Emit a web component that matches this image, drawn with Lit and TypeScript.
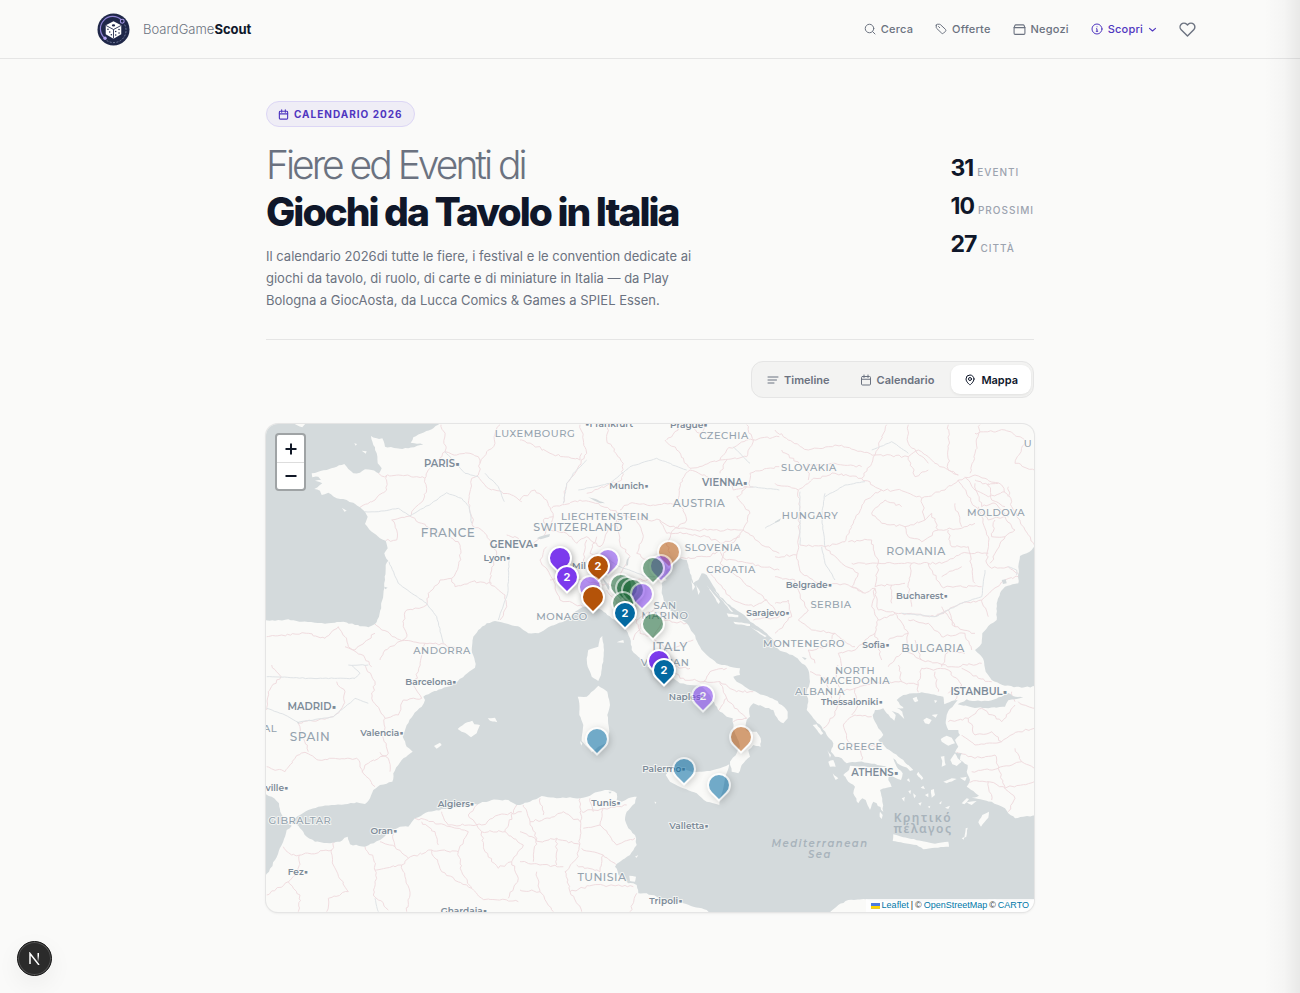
import { LitElement, html, svg, css } from "lit";
import { customElement, state } from "lit/decorators.js";
import { classMap } from "lit/directives/class-map.js";
import { styleMap } from "lit/directives/style-map.js";

/* ---------- map geometry ---------- */

type Pt = [number, number];

const MAP_W = 768;
const MAP_H = 488;

// The coastline is surveyed on six sheets, three units per map unit.
const SHEETS: Record<string, Pt> = {
  A: [-1, -4], B: [254, -4], C: [509, -4],
  D: [-1, 241], E: [254, 241], F: [509, 241],
};

function survey(src: string): Pt[] {
  const pts: Pt[] = [];
  let origin: Pt = SHEETS.A;
  for (const token of src.trim().split(/\s+/)) {
    if (SHEETS[token]) { origin = SHEETS[token]; continue; }
    const [x, y] = token.split(",").map(Number);
    pts.push([origin[0] + x / 3, origin[1] + y / 3]);
  }
  return pts;
}

// Breaks long straight runs into small irregular steps.
function roughen(pts: Pt[], amount: number, closed: boolean): string {
  let seed = Math.round(pts[0][0] * 31 + pts[0][1] * 17 + pts.length * 7) % 9973;
  const rnd = () => {
    seed = (seed * 16807 + 11) % 2147483647;
    return seed / 2147483647 - 0.5;
  };
  const out: string[] = [];
  const last = closed ? pts.length : pts.length - 1;
  for (let i = 0; i < last; i++) {
    const a = pts[i];
    const b = pts[(i + 1) % pts.length];
    const len = Math.hypot(b[0] - a[0], b[1] - a[1]);
    const n = Math.max(1, Math.round(len / 3));
    out.push(a[0].toFixed(1) + " " + a[1].toFixed(1));
    for (let k = 1; k < n; k++) {
      const t = k / n;
      const x = a[0] + (b[0] - a[0]) * t + rnd() * amount;
      const y = a[1] + (b[1] - a[1]) * t + rnd() * amount;
      out.push(x.toFixed(1) + " " + y.toFixed(1));
    }
  }
  if (!closed) {
    const e = pts[pts.length - 1];
    out.push(e[0].toFixed(1) + " " + e[1].toFixed(1));
  }
  return "M" + out.join("L") + (closed ? "Z" : "");
}

const area = (src: string, amount = 1.2) => roughen(survey(src), amount, true);
const line = (src: string, amount = 2.4) => roughen(survey(src), amount, false);

const SEAS = [
  // Channel and Bay of Biscay
  `A 0,5 530,5 520,14 500,28 470,40 445,52 437,68 475,74 430,85 395,85 360,80 352,55 335,55 318,48 325,75 335,100 338,130 350,145
   342,160 320,150 300,148 285,158 265,160 245,140 238,132 215,140 185,150 160,155 140,160 142,172 160,170 168,180 150,182 172,190
   148,207 165,212 170,225 190,218 215,235 245,240 265,248 285,262 300,275 308,290 300,312 320,335 345,355 362,362 368,385 358,400
   370,422 362,435 360,480 352,540 342,590 330,612 310,622 270,615 235,605 190,610 150,608 110,605 70,598 30,602 -5,602`,
  // Gulf of Cadiz
  `D -5,385 20,395 42,415 46,440 60,465 80,482 65,495 50,540 30,585 12,620 -5,645`,
  // Mediterranean, Adriatic and Aegean
  `D 70,472 105,450 130,435 160,425 200,420 240,418 275,412 300,417 315,400 325,375 345,360 382,350 385,325 400,300 410,285 443,260
   425,245 413,215 425,180 445,150 470,125 480,105 475,95 500,82 530,72 570,55 600,30 630,8
   A 632,732 628,715 620,690 625,650 640,630 665,610 690,603 720,610 750,618 765,622
   B 10,630 25,640 55,640 85,622 110,612 140,600 165,575 190,560 215,558 245,570 262,585 285,600 300,608 318,630 330,655 335,690 355,710 385,735
   E 405,15 430,35 460,40 480,55 510,60 540,60 570,90 585,120 600,140 620,155 638,160 640,190 650,215 660,245 650,265 630,290
   635,320 655,325 665,300 690,275 685,255 700,240 722,245 722,220 710,200 685,200 675,190 680,165 690,155 688,130 700,115 730,125 760,135
   F 0,150 10,165 25,175 38,160 38,140 20,120 0,105
   E 750,98 730,90 690,75 650,50 640,35 660,30 660,10 630,5
   B 590,730 555,700 540,680 520,640 500,610 470,590 450,570 435,550 425,520 425,490 440,480 430,470 440,450 460,430 480,415 500,420
   505,435 510,460 520,490 535,480 545,460 560,465 575,490 600,530 630,555 665,580 700,610 740,640 760,660
   C 0,682 25,695 60,710 90,735
   F 100,15 105,50 95,80 100,110 95,135 115,160 140,185 155,210 175,235 168,260 180,275 200,280 215,295 250,290 290,296 335,303 310,309
   260,304 225,302 222,315 205,330 220,350 240,365 235,385 250,415 262,400 272,405 285,435 295,410 305,415 325,440 322,410 315,375 330,370
   350,365 340,345 345,330 378,345 383,325 365,305 355,280 375,300 400,308 385,285 350,260 330,245 310,225 325,210 310,190 300,170 293,150
   300,135 325,130 335,145 358,167 362,150 350,138 370,145 388,162 382,140 365,128 385,130 403,148 375,120 365,105 385,90 415,85 440,82
   470,88 505,95 508,118 530,108 548,106 520,138 515,150 512,175 520,195 550,195 555,210 540,225 550,245 540,262 560,265 555,285 578,300
   575,320 585,345 575,365 595,378 612,392 590,398 625,405 650,410 670,420 690,430 700,445 720,460 745,455 785,452
   785,706 740,708 650,704 600,706 500,708 400,712 300,706 265,702 220,705 190,720 160,745
   E 575,745 560,735 520,725 490,715 460,708 430,710 410,695 380,685 355,685 350,660 340,655 325,655 300,635 285,605 300,590 330,570
   350,540 345,510 325,490 315,465 320,440 345,415 350,395 325,400 305,410 290,405 290,385 265,375 235,380 210,392 180,400 150,397 110,400
   65,393 30,410 0,420
   D 755,420 730,405 680,405 645,415 600,425 540,432 490,440 450,460 430,485 405,485 370,505 345,525 300,545 255,538 248,515 225,530
   195,535 150,530 125,515 105,490 100,482`,
  // Black Sea
  `C 785,378 755,400 735,408 730,440 730,490 690,500 675,520 665,550 665,600 640,618 622,640 620,670 600,690 620,710 628,732
   F 628,0 632,20 650,45 690,62 740,68 785,64`,
  // Sea of Marmara
  `F 548,118 575,103 600,108 640,108 680,95 700,84 712,92 745,99 700,106 690,125 640,130 590,127`,
];

const ISLANDS = [
  // Corsica, Sardinia, Sicily
  `B 240,655 247,648 252,690 250,725 E 246,0 243,30 235,48 215,35 203,5 B 200,715 205,690 235,680`,
  `E 173,95 200,95 235,62 262,80 270,120 262,150 268,200 260,235 235,245 215,262 185,228 190,180 178,150 178,115`,
  `E 437,330 450,315 480,310 520,322 570,318 600,310 628,298 615,340 610,370 600,400 598,420 560,410 530,385 490,370 450,350`,
  // Balearics
  `D 578,192 600,175 622,167 628,178 645,180 635,205 618,217 600,203 590,200`,
  `D 668,160 690,158 697,172 675,167`,
  `D 507,243 525,233 530,240 515,251`,
  // Crete, Rhodes, Karpathos
  `F 355,508 375,514 400,520 440,528 480,536 520,530 522,545 480,548 445,553 425,540 385,534 353,528`,
  `F 610,472 622,450 642,440 640,458 618,485`,
  `F 572,490 578,488 574,515 568,518`,
  // Aegean
  `F 315,440 323,450 320,462 314,455`,
  `F 385,295 405,318 415,315 400,300`, `F 430,320 445,340 440,345 425,328`,
  `F 445,165 455,158 470,165 462,178 450,175`, `F 470,150 488,148 482,158`,
  `F 413,100 425,95 430,108 420,112`, `F 478,105 487,107 480,115`,
  `F 497,222 515,212 530,218 540,235 520,242 500,230`, `F 497,275 508,273 512,300 500,305 502,288`,
  `F 526,285 540,265 548,280 560,290 545,303 532,298`, `F 505,350 530,340 545,342 515,355`, `F 555,338 575,335 570,348`,
  `F 468,375 477,372 480,390 470,398`, `F 450,390 460,385 460,397`, `F 437,368 445,362 450,372`,
  `F 415,385 423,392 418,400`, `F 395,345 402,340 405,352`, `F 400,378 408,376 406,388`, `F 380,400 390,396 388,410`,
  `F 430,415 440,412 436,422`, `F 458,425 466,422 464,430`, `F 492,415 500,408 498,418`, `F 510,428 525,422 520,432`,
  `F 560,415 575,400 582,402 568,418`, `F 575,412 605,408 590,420`, `F 560,520 568,516 566,524`,
  // Ionian
  `F 113,180 125,178 145,205 138,210`, `F 160,290 175,285 182,305 165,305`, `F 173,325 190,340 182,345`, `F 157,255 168,270 165,278`,
  // Dalmatia
  `B 513,480 525,500 518,512`, `B 528,495 540,515 535,525`, `B 560,495 600,545 596,552`, `B 580,510 640,575 634,575`,
  `B 620,580 655,585 655,592 625,590`, `B 640,605 690,612 690,618 645,612`, `B 690,620 740,648 735,652`,
  // Elba, Malta, Djerba, Channel Islands
  `B 290,667 310,660 312,668`, `E 403,410 409,411 407,417`, `E 328,632 348,635 345,650 330,648`,
  `A 290,92 305,94 302,101`, `A 268,70 276,72 272,77`, `A 230,264 245,272 238,275`, `A 75,5 125,5 112,22`,
  `E 355,570 345,575 350,578`, `E 180,228 187,235 184,242`,
];

const BORDERS = [
  // France
  `A 528,14 540,45 540,95 575,105 615,100 640,110 645,130 665,95 690,70 690,40 705,14`,
  `A 338,150 350,168 400,165 455,170 480,175 490,150 520,120 540,95`,
  `A 365,165 365,210 330,240 285,262`, `A 480,175 485,205 475,240 440,275 435,288`,
  `A 435,288 380,300 395,330 395,360 362,362`, `A 435,288 470,310 500,330 540,345 580,365 588,400 580,440 560,475`,
  `A 645,130 640,165 620,175 615,215 610,250 620,290 625,320 650,330 680,365 695,400 680,450 675,490 720,525 725,560 705,600`,
  `A 640,170 670,205 710,215 740,225 770,245`, `A 560,475 525,480 490,520 485,555 420,575 415,620 425,650 410,662`,
  `A 560,475 570,500 620,485 680,490`, `A 725,345 760,355 770,380`,
  `A 330,612 350,630 410,662 480,670 540,672 585,690`,
  // Spain, Portugal, Morocco
  `A 5,650 50,645 130,640 180,655 220,620 240,650 250,680 300,715 320,740`,
  `A 330,640 300,665 270,690 240,680`, `A 410,662 360,690 345,720`, `A 480,670 475,700 D 460,20 445,60 470,100`,
  `D 20,0 48,35 10,80 5,135`, `D 5,305 60,320 90,280 120,262 160,285 275,280 300,330 330,365`,
  `D 215,50 240,80 235,120 205,155 100,175 130,260`, `D 300,0 330,50 320,100 360,160 400,150 415,105 470,100`,
  `D 360,160 355,220 370,265 300,300 290,320`, `D 345,262 370,280 375,320`,
  `D 55,545 80,570 105,570 200,555 210,530`, `D 300,545 325,580 335,640 325,690 370,735`, `D 105,570 100,620 70,650 5,690`,
  `D 200,555 205,600 250,680 190,700 185,740`, `D 70,650 105,690 100,740`,
  // Algeria, Tunisia
  `D 345,530 390,545 430,580 500,555 580,560 610,500 540,480 450,460`, `D 330,615 410,600 430,580`, `D 410,600 435,690 425,740`,
  `D 500,555 530,620 620,670 650,700 760,710`, `D 580,560 590,620 620,670`, `D 640,415 610,450 650,500 720,500 755,420`,
  `D 470,470 510,500 520,540`, `D 650,500 660,560 700,610 740,590 760,640 730,700`, `D 530,440 550,480 610,480`,
  `D 610,480 650,480 700,450 770,440`, `D 720,500 775,540 740,590`, `D 385,505 390,545`,
  `E 180,400 185,460 180,520 170,580 135,620 150,680 185,740`, `E 10,420 30,470 90,460 130,440 180,470`,
  `E 0,500 60,530 110,520 180,540`, `E 30,470 50,520 40,590`, `E 0,590 60,600 130,605`, `E 110,520 110,600`, `E 50,620 60,680 100,740`,
  `E 0,675 60,680`, `E 185,440 250,430 320,420`, `E 250,430 240,480 290,540 345,520`, `E 185,550 250,570 290,600`,
  `E 240,480 190,490`, `E 250,570 240,620 170,600`, `E 150,680 220,660 340,665`, `E 350,685 330,740`, `E 210,400 220,440`, `E 60,400 70,450`,
  // Germany, Czechia, Austria, Switzerland
  `B 0,60 40,75 90,100 130,110 180,120 185,100`, `B 180,14 190,60 200,100 165,160 140,190 130,250`,
  `B 265,14 260,60 310,130 305,180 200,220`, `B 435,60 470,90 510,145 600,120 680,110 700,60 680,14`,
  `B 440,60 475,30 475,14`, `B 510,150 480,190 470,250 400,255 330,250 300,270`, `B 95,265 180,240 235,250 270,270 300,280 350,300 420,300`,
  `B 0,240 45,210 80,240 100,290 70,350 40,370`, `B 100,290 70,300 90,330 140,340 170,370 200,350 240,380 270,320 300,300`,
  `B 420,300 450,320 520,330 580,330 670,330 690,280 650,230 680,200 600,180 560,170 510,150`, `B 690,200 690,160 778,140`,
  `B 600,120 620,90 680,60 778,50`, `B 510,14 540,40 560,14`, `B 620,170 640,210 700,200`, `B 670,330 720,370 778,400`,
  `B 480,250 500,300 460,330 440,370 450,400`, `B 500,340 560,350 610,370 660,350`, `B 480,415 560,410 600,390 620,420 690,430 778,450`,
  `B 670,330 610,400 600,430 690,500 740,540 700,560 640,540 580,470 560,450`, `B 740,540 778,590 700,600`, `B 600,160 620,120`,
  // Italy
  `B 80,380 60,420 100,480 120,540 190,560`, `B 90,480 150,470 230,490 290,500 350,480 430,480`, `B 200,360 190,420 220,470`,
  `B 290,300 300,370 330,410 300,470`, `B 350,300 370,350 350,400 400,430`, `B 260,510 300,560 350,600 420,560`,
  `B 350,600 360,640 400,650 430,600 500,610`, `B 400,650 440,690 520,660`, `B 370,600 340,660`, `B 440,690 450,740 510,745`,
  `E 450,0 480,40 550,50 570,20 620,10`, `E 550,50 600,50 650,80 700,80`, `E 600,50 620,100 590,140`, `E 620,100 680,160 640,170`,
  `B 250,410 210,400 230,350`, `B 420,300 440,340 500,340`,
  // Poland, Slovakia, Hungary, Ukraine
  `C 0,30 40,60 100,90 180,75 240,90 300,105 335,14`, `C 0,190 70,210 110,180 180,160 260,175 290,130 300,105`,
  `C 70,210 75,260 70,375 65,405 0,410`, `C 260,175 320,210 380,212 440,235 510,210 550,180 600,165 680,195 700,230`,
  `C 320,210 270,240 235,310 210,365 150,380 75,375`, `C 300,105 400,110 430,90 480,130 550,165`, `C 400,110 420,170 460,150`,
  `C 520,14 520,150 550,165`, `C 615,14 600,100 585,160`, `C 400,14 400,70 460,130`, `C 600,40 690,30 750,60 720,130 778,150`,
  `C 550,180 580,230 620,290 640,350 635,430 650,445 700,440 730,460`, `C 700,200 710,260 750,330 778,375`,
  `C 570,170 600,210 640,230 690,215`, `C 600,190 620,260 660,250 700,290`, `C 610,260 640,300 690,290 720,330 690,350 660,400 645,430`,
  `C 640,190 650,240 690,260`, `C 660,300 650,350 690,350`, `C 600,180 640,195 670,190`, `C 100,130 100,180`, `C 20,90 80,140 180,130 260,140`,
  // Romania
  `C 150,380 200,430 250,460 230,500 270,520 300,505 310,570 380,580 480,590 560,550 620,540 690,480 730,470`,
  `C 290,360 220,365`, `C 290,360 310,430 380,430 410,430 500,430 560,400 640,400`, `C 410,430 400,490 410,560`, `C 460,430 500,500 620,500`,
  `C 440,235 450,300 390,320 400,350 440,365 490,330 560,325 600,310`, `C 290,280 320,310 390,320`, `C 290,280 330,240 380,260`,
  `C 490,330 470,280 450,300`, `C 520,330 530,380 580,380 590,440 600,490`, `C 540,250 560,320`, `C 310,430 300,500 390,490`,
  `C 230,430 310,430`, `C 560,440 500,470`, `C 350,495 350,550`,
  // Balkans, Bulgaria
  `C 0,470 60,480 80,540 100,570 70,600 110,630 180,640 215,670 240,680`, `C 65,405 80,460 130,490 220,495 265,520`,
  `C 300,505 290,560 310,600 300,640 240,690 190,700 200,740`, `C 180,640 150,680 100,690 120,730`, `C 0,550 40,540 50,590 0,640`,
  `C 310,600 360,580 400,640 390,690 440,720 530,740 620,730`, `C 400,600 460,610 500,650`, `C 480,590 520,570 540,620 600,640`,
  `C 400,640 340,660`, `C 500,650 570,640 590,690`, `C 540,620 500,560`, `C 440,720 420,660`, `C 500,740 520,690 570,700`,
  `C 620,540 640,590`, `C 300,640 320,720`, `C 340,740 380,700`,
  `F 190,0 180,40 200,80 240,70 300,55 360,50 430,60 440,10 520,15 560,60 520,85`, `F 200,80 180,150 145,190`, `F 105,20 150,40 170,100`,
  `F 240,150 205,180 220,230 260,250 320,240`, `F 240,150 290,155`, `F 240,70 250,120 230,150`, `F 430,60 430,82`, `F 560,60 540,105`,
  `F 560,10 610,40 650,50`, `F 260,250 260,285`, `F 380,50 370,0`, `F 480,20 490,80`,
  // Anatolia
  `F 520,170 580,160 620,130`, `F 580,160 600,210 650,200 680,230 730,200 778,190`, `F 560,210 600,240 680,230`, `F 620,130 680,170 720,120`,
  `F 545,262 600,280 660,270 670,310 590,320`, `F 670,310 740,290 778,310`, `F 580,350 640,350 690,370 670,310`, `F 690,370 720,400 700,440`,
  `F 720,250 740,290`, `F 690,370 778,350`, `F 730,110 778,130`, `F 710,80 720,110`, `F 640,350 650,405`,
];

const RIVERS = [
  `A 300,275 340,275 400,265 435,288 500,250 545,218 590,235 612,260 620,310`, `A 540,95 600,160 640,170`,
  `A 660,160 700,200 718,245`, `A 372,425 400,490 440,520 485,550 515,590 535,670`, `A 733,405 728,520 700,600`,
  `B 200,120 160,160 140,190 130,250`, `B 175,210 270,190 330,140 410,115 500,150`, `B 690,200 778,210`, `B 640,80 690,130`,
  `C 75,215 75,375`, `C 150,220 140,290 150,380`, `C 270,185 210,195 150,230`, `C 290,90 350,65 400,100`, `C 140,380 150,430 180,480`,
  `C 380,580 480,590 560,550 620,530 630,450`, `C 700,440 725,450 725,465`,
  `D 5,130 60,150 100,172 205,155 270,100 310,115`, `D 5,35 130,40 270,40 285,25 260,0`, `D 310,0 250,0`,
  `B 250,410 300,440 380,470 430,470`, `B 735,325 778,300`, `D 340,740 330,700`,
];

const LAKES = [
  `B 50,355 68,347 90,342 88,350 62,358`, `B 205,232 225,236 255,250 240,250`, `B 320,420 327,410 324,435 319,438`,
  `C 0,305 18,295 14,303 0,308`, `C 680,480 692,478 695,490 684,492`, `B 245,470 270,500 265,510`, `C 80,710 95,715 90,720`,
  `E 265,380 275,380 270,386`, `D 95,172 103,172 100,177`, `A 358,500 368,503 360,508`,
];

const LAND_SHAPES = ISLANDS.map((s) => area(s, 0.6)).join("");
const SEA_SHAPES = SEAS.map((s) => area(s)).join("");
const BORDER_LINES = BORDERS.map((s) => line(s)).join("");
const RIVER_LINES = RIVERS.map((s) => line(s, 0.8)).join("");
const LAKE_SHAPES = LAKES.map((s) => area(s, 0.4)).join("");

/* ---------- map content ---------- */

type Label = { text: string; x: number; y: number; kind: string };

const country = (text: string, x: number, y: number, kind = "country"): Label => ({ text, x, y, kind });
const city = (text: string, x: number, y: number, kind = "city"): Label => ({ text, x, y, kind });

const LABELS: Label[] = [
  country("LUXEMBOURG", 269, 13), country("CZECHIA", 458, 15), country("SLOVAKIA", 543, 47), country("FRANCE", 182, 113, "country large"),
  country("LIECHTENSTEIN", 339, 96), country("SWITZERLAND", 312, 107, "country medium"), country("AUSTRIA", 433, 83, "country medium"),
  country("HUNGARY", 544, 95), country("ROMANIA", 650, 131, "country medium"), country("MOLDOVA", 730, 92), country("SLOVENIA", 447, 127),
  country("CROATIA", 465, 149), country("SERBIA", 565, 184), country("MONACO", 296, 196), country("SAN", 399, 185),
  country("MARINO", 399, 195), country("ITALY", 404, 227, "country large"), country("VATICAN", 399, 242), country("MONTENEGRO", 538, 223),
  country("BULGARIA", 667, 228, "country medium"), country("NORTH", 589, 250), country("MACEDONIA", 589, 260), country("ALBANIA", 554, 271),
  country("GREECE", 594, 326), country("ANDORRA", 176, 230), country("SPAIN", 44, 317, "country large"), country("GIBRALTAR", 34, 400),
  country("TUNISIA", 336, 457, "country medium"), country("U", 762, 23), country("AL", 4, 308),
  country("Mediterranean", 554, 423, "sea"), country("Sea", 554, 434, "sea"), country("Κρητικό", 657, 398, "sea upright"),
  country("πέλαγος", 657, 409, "sea upright"),
  city("PARIS", 176, 43, "capital"), city("VIENNA", 459, 62, "capital"), city("GENEVA", 248, 124, "capital"), city("MADRID", 46, 286, "capital"),
  city("ISTANBUL", 713, 271, "capital"), city("ATHENS", 609, 352, "capital"), city("Munich", 363, 65), city("Lyon", 231, 137),
  city("Mil", 313, 145), city("Belgrade", 543, 164), city("Bucharest", 656, 175), city("Sofia", 610, 224),
  city("Sarajevo", 502, 192), city("Thessaloniki", 586, 281), city("Barcelona", 165, 261), city("Valencia", 116, 312), city("ville", 11, 367),
  city("Oran", 118, 410), city("Algiers", 190, 383), city("Fez", 32, 451), city("Tunis", 340, 382), city("Valletta", 423, 405),
  city("Tripoli", 400, 480), city("Palermo", 398, 348), city("Naples", 421, 276), city("Ghardaia", 198, 490), city("Frankfurt", 343, 3),
  city("Prague", 423, 4),
];

const dotted = (l: Label) => {
  if (l.text === "Mil") return l.text;
  if (l.text === "Frankfurt") return "▪" + l.text;
  return l.kind === "city" || l.kind === "capital" ? l.text + "▪" : l.text;
};

type Pin = { place: string; x: number; y: number; tone: string; past?: boolean; count?: number };

const PINS: Pin[] = [
  { place: "Udine", x: 403, y: 128, tone: "amber", past: true },
  { place: "Aosta", x: 294, y: 134, tone: "violet" },
  { place: "Bergamo", x: 342, y: 136, tone: "violet", past: true },
  { place: "Venezia", x: 395, y: 142, tone: "violet", past: true },
  { place: "Milano", x: 332, y: 142, tone: "amber", count: 2 },
  { place: "Padova", x: 387, y: 144, tone: "green", past: true },
  { place: "Torino", x: 301, y: 153, tone: "violet", count: 2 },
  { place: "Parma", x: 355, y: 161, tone: "green", past: true },
  { place: "Alessandria", x: 324, y: 163, tone: "violet", past: true },
  { place: "Reggio Emilia", x: 361, y: 164, tone: "green", past: true },
  { place: "Modena", x: 367, y: 166, tone: "green", past: true },
  { place: "Bologna", x: 376, y: 170, tone: "violet", past: true },
  { place: "Genova", x: 327, y: 173, tone: "amber" },
  { place: "Massa", x: 357, y: 179, tone: "green", past: true },
  { place: "Lucca", x: 359, y: 189, tone: "blue", count: 2 },
  { place: "Perugia", x: 387, y: 200, tone: "green", past: true },
  { place: "Viterbo", x: 393, y: 237, tone: "violet" },
  { place: "Roma", x: 398, y: 246, tone: "blue", count: 2 },
  { place: "Napoli", x: 437, y: 272, tone: "violet", past: true, count: 2 },
  { place: "Cosenza", x: 475, y: 313, tone: "amber", past: true },
  { place: "Cagliari", x: 331, y: 315, tone: "blue", past: true },
  { place: "Palermo", x: 418, y: 345, tone: "blue", past: true },
  { place: "Catania", x: 453, y: 361, tone: "blue", past: true },
];

/* ---------- icons ---------- */

const icon = (body: unknown, size: number, weight = 2) => html`<svg class="icon" width=${size} height=${size} viewBox="0 0 24 24" fill="none"
  stroke="currentColor" stroke-width=${weight} stroke-linecap="round" stroke-linejoin="round" aria-hidden="true">${body}</svg>`;

const searchShape = svg`<circle cx="11" cy="11" r="8.500"/><path d="m22 22-4.800-4.800"/>`;
const tagShape = svg`<path d="M2.500 4.500v4.600a2 2 0 0 0 .6 1.400l10.300 9.900a2.600 2.600 0 0 0 3.600 0l4-4a2.600 2.600 0 0 0 0-3.600L10.700 3.100A2.400 2.400 0 0 0 9 2.500H4.500a2 2 0 0 0-2 2Z"/><path d="m7 7 2.500 2.500"/>`;
const shopShape = svg`<path d="M2 8.500h20V19a2 2 0 0 1-2 2H4a2 2 0 0 1-2-2Z"/><path d="m2 8.500 1.500-3.800A2 2 0 0 1 5.400 3.500h13.200a2 2 0 0 1 1.900 1.200L22 8.500"/>`;
const infoShape = svg`<circle cx="12" cy="12" r="10"/><path d="M12 16.500v-5h-1.200"/><path d="M10.500 16.500h3"/><path d="M12 7.500h.01"/>`;
const chevronShape = svg`<path d="m4 9 8 7 8-7"/>`;
const heartShape = svg`<path d="M20.800 4.600a5.500 5.500 0 0 0-7.800 0L12 5.700l-1.100-1.100a5.500 5.500 0 0 0-7.800 7.800L12 21.200l8.800-8.800a5.500 5.500 0 0 0 0-7.800Z"/>`;
const calendarShape = svg`<rect x="3" y="5" width="18" height="17" rx="2"/><path d="M3 10.500h18"/><path d="M8 2v5"/><path d="M16 2v5"/>`;
const listShape = svg`<path d="M2 6h20"/><path d="M2 12h17"/><path d="M2 18h12"/>`;
const placeShape = svg`<path d="M20 10c0 6-8 12-8 12s-8-6-8-12a8 8 0 0 1 16 0Z"/><circle cx="12" cy="10" r="3"/>`;

const logo = html`<svg class="logo" width="33" height="33" viewBox="0 0 34 34" aria-hidden="true">
  <circle cx="17" cy="17" r="16.500" fill="#1f2749"/>
  <path d="M7.500 25.500A12.700 12.700 0 0 1 25 7" fill="none" stroke="#8f83d6" stroke-width="1.200"/>
  <path d="M28.500 12A12.700 12.700 0 0 1 9 27.500" fill="none" stroke="#77809f" stroke-width="1" stroke-dasharray="2 1.500"/>
  <circle cx="26" cy="8.500" r="2" fill="#1f2749" stroke="#a99bea" stroke-width="1.100"/>
  <circle cx="8.300" cy="26" r="1.700" fill="#b3a4f5"/>
  <path d="M17 8.500 25 12.600v9.300L17 26.500l-8-4.600v-9.300Z" fill="#fff"/>
  <path d="M9.300 12.900 17 17l7.700-4.100M17 17v9.200" fill="none" stroke="#1f2749" stroke-width=".9"/>
  <ellipse cx="17" cy="12.800" rx="1.700" ry="1.100" fill="#1f2749"/>
  <circle cx="11.300" cy="16.800" r=".8" fill="#1f2749"/><circle cx="13.100" cy="19.500" r=".8" fill="#1f2749"/><circle cx="14.800" cy="22.500" r=".8" fill="#1f2749"/>
  <circle cx="19.300" cy="19" r=".8" fill="#1f2749"/><circle cx="22.700" cy="17" r=".8" fill="#1f2749"/>
  <circle cx="19.300" cy="22.600" r=".8" fill="#1f2749"/><circle cx="22.700" cy="20.600" r=".8" fill="#1f2749"/>
</svg>`;

/* ---------- elements ---------- */

@customElement("event-map")
class EventMap extends LitElement {
  static styles = css`
    :host { display: block; }
    .map { position: relative; aspect-ratio: 768 / 488; overflow: hidden; border-radius: 12px; background: #fafaf8;
      box-shadow: 0 0 0 1px #e5e5e5, 0 1px 3px rgba(0, 0, 0, 0.1); font-family: Inter, sans-serif; }
    .terrain { display: block; width: 100%; height: 100%; }
    .water { fill: #d4dadc; }
    .land { fill: #fafaf8; }
    .border { fill: none; stroke: #f0dcdf; stroke-width: 1; stroke-linejoin: round; }
    .river { fill: none; stroke: #dfe3e6; stroke-width: 1; }
    .label { text-anchor: middle; paint-order: stroke; stroke: rgba(250, 250, 248, 0.8); stroke-width: 2px; stroke-linejoin: round;
      font-family: "Montserrat", Inter, sans-serif; font-size: 9px; font-weight: 600; fill: #7d8b99; }
    .country { font-size: 10px; font-weight: 500; letter-spacing: 0.5px; fill: #94a2ae; }
    .medium { font-size: 11px; }
    .large { font-size: 12px; }
    .capital { font-size: 10px; font-weight: 600; }
    .sea { font-size: 10px; font-style: italic; font-weight: 600; letter-spacing: 1.5px; fill: #a8b3bb; stroke: none; }
    .upright { font-style: normal; font-family: "Noto Sans", sans-serif; font-size: 12px; }
    .pin { position: absolute; width: 26px; height: 26px; margin: -13px 0 0 -13px; padding: 0; border: 0; background: none; cursor: pointer; }
    .pin.past { opacity: 0.55; }
    .drop { position: absolute; inset: 1px; border: 2px solid #fff; border-radius: 50% 50% 50% 0; transform: rotate(-45deg);
      box-sizing: border-box; box-shadow: 0 2px 6px rgba(0, 0, 0, 0.3); background: var(--tone); }
    .count { position: relative; color: #fff; font: 700 11px/26px Inter, sans-serif; }
    .violet { --tone: #7c3aed; }
    .amber { --tone: #b45309; }
    .green { --tone: #166534; }
    .blue { --tone: #0369a1; }
    .zoom { position: absolute; top: 9px; left: 9px; display: grid; width: 27px; border: 2px solid rgba(0, 0, 0, 0.25);
      border-radius: 4px; background: #fff; background-clip: padding-box; }
    .step { height: 27px; padding: 0; border: 0; background: none; color: #111827; cursor: pointer; }
    .step + .step { border-top: 1px solid #ddd; }
    .step svg { display: block; margin: auto; }
    .credit { position: absolute; right: 0; bottom: 0; display: flex; align-items: center; gap: 2px; height: 13px; padding: 0 5px;
      background: rgba(255, 255, 255, 0.8); color: #333; font: 9px/13px "Liberation Sans", sans-serif; white-space: nowrap; }
    .credit a { color: #0078a8; text-decoration: none; }
  `;

  render() {
    return html`<section class="map" aria-label="Mappa degli eventi">
      <svg class="terrain" viewBox="0 0 ${MAP_W} ${MAP_H}" preserveAspectRatio="xMidYMid slice">
        <path class="border" d=${BORDER_LINES}></path>
        <path class="river" d=${RIVER_LINES}></path>
        <path class="water" d=${SEA_SHAPES + LAKE_SHAPES}></path>
        <path class="land" d=${LAND_SHAPES}></path>
        ${LABELS.map((l) => svg`<text class="label ${l.kind}" x=${l.x} y=${l.y}>${dotted(l)}</text>`)}
      </svg>
      ${PINS.map((p) => html`<button class=${classMap({ pin: true, past: !!p.past, [p.tone]: true })} aria-label=${p.place}
        style=${styleMap({ left: (p.x / MAP_W) * 100 + "%", top: (p.y / MAP_H) * 100 + "%" })}>
        <span class="drop"></span>${p.count ? html`<span class="count">${p.count}</span>` : ""}
      </button>`)}
      <div class="zoom">
        <button class="step" aria-label="Zoom avanti"><svg width="12" height="12" viewBox="0 0 12 12"><path d="M6 .5v11M.5 6h11" stroke="currentColor" stroke-width="2"/></svg></button>
        <button class="step" aria-label="Zoom indietro"><svg width="12" height="12" viewBox="0 0 12 12"><path d="M.5 6h11" stroke="currentColor" stroke-width="2"/></svg></button>
      </div>
      <div class="credit">
        <svg width="9" height="6" viewBox="0 0 12 8" aria-hidden="true"><path fill="#4c7be1" d="M0 0h12v4H0z"/><path fill="#ffd500" d="M0 4h12v3H0z"/><path fill="#e0bc00" d="M0 7h12v1H0z"/></svg>
        <a href="#leaflet">Leaflet</a><span>|</span><span>©</span><a href="#osm">OpenStreetMap</a><span>©</span><a href="#carto">CARTO</a>
      </div>
    </section>`;
  }
}

@customElement("app-root")
class AppRoot extends LitElement {
  @state() private view = "Mappa";

  static styles = css`
    :host { display: block; position: relative; min-height: 100vh; background: #fafaf9; color: #6b7280; font-family: Inter, sans-serif; }
    .icon { flex: none; display: block; }
    .top { border-bottom: 1px solid #e5e5e5; }
    .bar { box-sizing: border-box; display: flex; align-items: center; justify-content: space-between; max-width: 1138px; height: 58px; margin: 0 auto; padding: 0 15px 0 16px; }
    .brand { display: flex; align-items: center; gap: 13px; color: #6b7280; font-size: 13px; font-weight: 300; text-decoration: none; }
    .brand b { color: #0f172a; font-weight: 700; }
    .logo { display: block; }
    .links { display: flex; align-items: center; gap: 22px; }
    .link { display: flex; align-items: center; gap: 5px; padding: 0; border: 0; background: none; color: #6b7280; font: 500 11px/16px Inter, sans-serif;
      letter-spacing: 0.2px; text-decoration: none; cursor: pointer; }
    .active { color: #4f36c0; }
    .heart { padding: 8px; margin-left: -8px; border: 0; background: none; color: #6b7280; cursor: pointer; }
    .page { box-sizing: border-box; max-width: 800px; margin: 0 auto; padding: 42px 16px 80px; }
    .hero { display: flex; align-items: center; justify-content: space-between; gap: 32px; padding-bottom: 28px; border-bottom: 1px solid #e5e5e5; }
    .intro { max-width: 450px; }
    .badge { box-sizing: border-box; display: inline-flex; align-items: center; gap: 5px; height: 26px; padding: 0 11px; border: 1px solid #dcd6f5; border-radius: 13px;
      background: #efedf6; color: #4f36c0; font-size: 10px; font-weight: 700; letter-spacing: 1px; }
    .title { margin: 14px 0 10px; font-size: 39px; line-height: 47px; font-weight: 300; letter-spacing: -3px; white-space: nowrap; }
    .title b { display: block; color: #0f172a; font-weight: 800; letter-spacing: -2px; }
    .lead { margin: 0; font-size: 13px; line-height: 22px; }
    .stats { display: grid; gap: 8px; margin: 0; }
    .stat { display: flex; flex-direction: row-reverse; justify-content: flex-end; align-items: baseline; gap: 4px; }
    .stat dd { margin: 0; color: #0f172a; font-size: 23px; line-height: 30px; font-weight: 700; letter-spacing: -1px; }
    .stat dt { color: #9ca3af; font-size: 10px; font-weight: 500; letter-spacing: 1px; }
    .switch { display: flex; justify-content: flex-end; padding: 21px 0 26px; }
    .tabs { display: flex; gap: 4px; padding: 3px 2px; border: 1px solid #e5e5e5; border-radius: 12px; background: #f3f3f2; }
    .tab { display: flex; align-items: center; gap: 5px; height: 29px; padding: 0 13px; border: 0; border-radius: 9px; background: none; color: #6b7280;
      font: 600 11px/16px Inter, sans-serif; cursor: pointer; }
    .on { background: #fff; color: #0f172a; box-shadow: 0 1px 3px rgba(0, 0, 0, 0.08); }
    .edge { position: absolute; top: 0; right: 0; bottom: 0; width: 36px; pointer-events: none;
      background: linear-gradient(to left, rgba(0, 0, 0, 0.07), rgba(0, 0, 0, 0.02) 45%, transparent); }
    .dev { position: fixed; left: 17px; bottom: 17px; width: 35px; height: 35px; padding: 0; border: 1px solid #161616; border-radius: 50%; background: #2b2b2b;
      box-shadow: inset 0 0 0 1px #555, 0 8px 24px rgba(0, 0, 0, 0.06); cursor: pointer; }
    .dev svg { display: block; margin: auto; }
  `;

  render() {
    const stats = [[31, "EVENTI"], [10, "PROSSIMI"], [27, "CITTÀ"]];
    const tabs: [string, unknown][] = [["Timeline", listShape], ["Calendario", calendarShape], ["Mappa", placeShape]];
    return html`
      <header class="top">
        <div class="bar">
          <a class="brand" href="#home">${logo}<span>BoardGame<b>Scout</b></span></a>
          <nav class="links">
            <a class="link" href="#cerca">${icon(searchShape, 12)}Cerca</a>
            <a class="link" href="#offerte">${icon(tagShape, 12)}Offerte</a>
            <a class="link" href="#negozi">${icon(shopShape, 13)}Negozi</a>
            <button class="link active">${icon(infoShape, 12)}Scopri${icon(chevronShape, 9, 3)}</button>
            <button class="heart" aria-label="Preferiti">${icon(heartShape, 17)}</button>
          </nav>
        </div>
      </header>
      <main class="page">
        <section class="hero">
          <div class="intro">
            <span class="badge">${icon(calendarShape, 11, 2.5)}CALENDARIO 2026</span>
            <h1 class="title">Fiere ed Eventi di <b>Giochi da Tavolo in Italia</b></h1>
            <p class="lead">Il calendario 2026di tutte le fiere, i festival e le convention dedicate ai giochi da tavolo, di ruolo, di carte e di miniature in Italia — da Play Bologna a GiocAosta, da Lucca Comics &amp; Games a SPIEL Essen.</p>
          </div>
          <dl class="stats">
            ${stats.map(([n, label]) => html`<div class="stat"><dt>${label}</dt><dd>${n}</dd></div>`)}
          </dl>
        </section>
        <div class="switch">
          <div class="tabs" role="tablist">
            ${tabs.map(([name, shape]) => html`<button role="tab" aria-selected=${name === this.view} class=${classMap({ tab: true, on: name === this.view })}
              @click=${() => { this.view = name; }}>${icon(shape, 12)}${name}</button>`)}
          </div>
        </div>
        <event-map></event-map>
      </main>
      <div class="edge"></div>
      <button class="dev" aria-label="Strumenti di sviluppo"><svg width="13" height="13" viewBox="0 0 13 13">
        <defs><linearGradient id="fade" x1="0" y1="0" x2="0" y2="1"><stop offset=".3" stop-color="#fff"/><stop offset="1" stop-color="#fff" stop-opacity="0"/></linearGradient></defs>
        <path d="M2 12V1.500L11 13" fill="none" stroke="#fff" stroke-width="1.500"/><rect x="9.500" y="1" width="1.500" height="9" fill="url(#fade)"/></svg></button>
    `;
  }
}
